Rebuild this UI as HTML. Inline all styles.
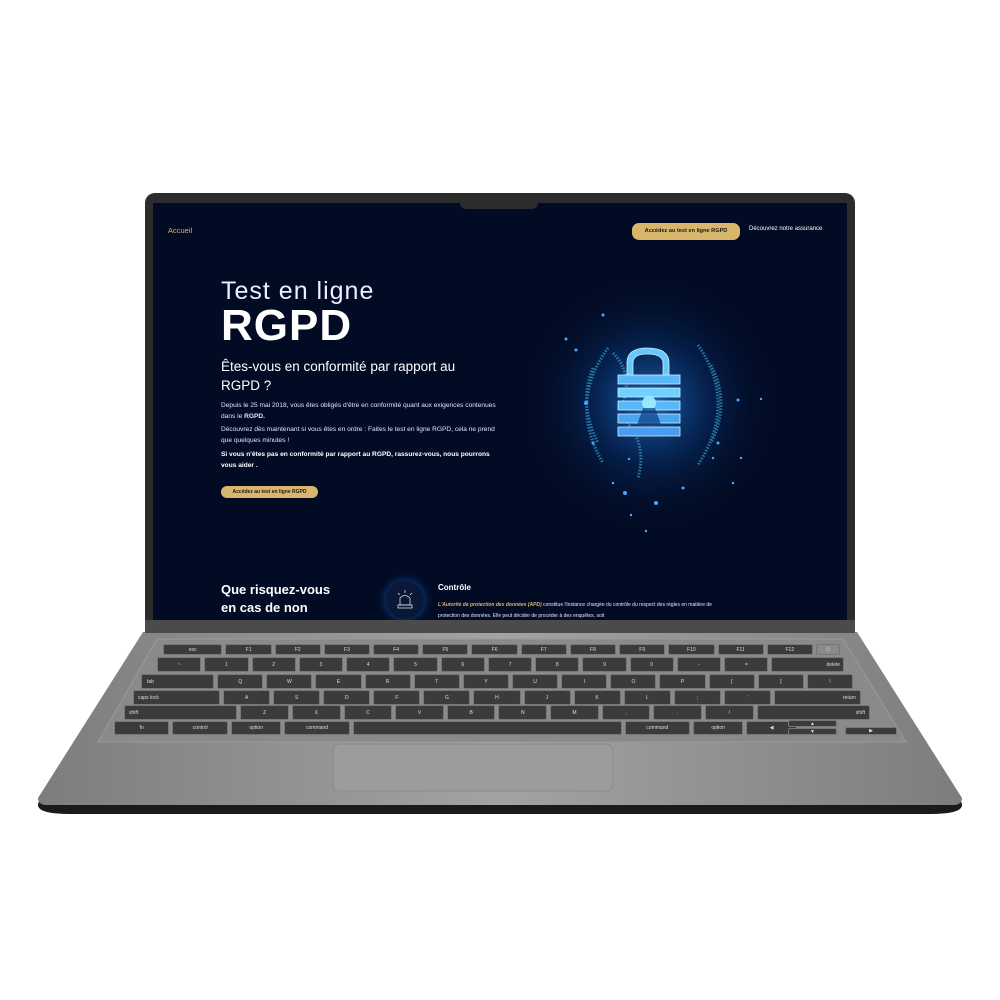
<!DOCTYPE html><html><head><style>
*{margin:0;padding:0;box-sizing:border-box}
body{width:1000px;height:1000px;background:#fff;position:relative;overflow:hidden;font-family:"Liberation Sans",sans-serif}
.abs{position:absolute}
.lid{left:145px;top:193px;width:710px;height:440px;background:#2c2c2c;border-radius:10px 10px 0 0}
.hinge{left:145px;top:620px;width:710px;height:13px;background:#4b4b4b}
.screen{left:153px;top:203px;width:694px;height:417px;background:#020b24;overflow:hidden;color:#fff}
.notch{left:460px;top:203px;width:78px;height:6px;background:#2c2c2c;border-radius:0 0 6px 6px}
.gold{background:#d9b66b;color:#1a1a1a;font-weight:bold;border-radius:7px;text-align:center}
.row{position:absolute;display:flex;gap:3px}
.k{background:#3b3b3b;border:1px solid #777;border-radius:2px;color:#ddd;font-size:5px;display:flex;align-items:center;justify-content:center;height:100%}
</style></head><body>
<svg class="abs" style="left:0;top:0" width="1000" height="1000">
<defs>
<linearGradient id="bg" x1="0" x2="1"><stop offset="0" stop-color="#7d7d7d"/><stop offset=".5" stop-color="#a3a3a3"/><stop offset="1" stop-color="#7d7d7d"/></linearGradient>
<radialGradient id="glow" cx=".5" cy=".5" r=".5"><stop offset="0" stop-color="#2a8af0" stop-opacity=".7"/><stop offset=".45" stop-color="#0b4a9a" stop-opacity=".35"/><stop offset="1" stop-color="#020b24" stop-opacity="0"/></radialGradient>
</defs>
<path d="M40 800 Q30 814 70 814 L930 814 Q970 814 960 800Z" fill="#1a1a1a"/>
<path d="M143 632 L857 632 L962 798 Q962 804 955 805 L45 805 Q38 804 38 798Z" fill="url(#bg)"/>
<path d="M157 639 L843 639 L906 742 L98 742Z" fill="#8a8a8a" stroke="#9a9a9a"/>
<rect x="333" y="744" width="280" height="47" rx="7" fill="#9c9c9c" stroke="#8a8a8a"/>
</svg>
<div class="abs lid"></div>
<div class="abs hinge"></div>
<div class="abs screen">
<svg class="abs" style="left:0;top:0" width="694" height="417">
<circle cx="497" cy="200" r="130" fill="url(#glow)"/>
<g fill="none" stroke="#3fb0e0" stroke-dasharray="1.5 1.5" stroke-width="3" opacity=".6">
<path d="M455 145 Q415 200 450 260"/><path d="M440 165 Q425 200 445 240"/><path d="M545 142 Q585 200 545 262"/><path d="M558 162 Q578 200 558 240"/><path d="M470 215 Q495 240 485 275"/><path d="M460 150 Q480 170 470 200"/>
</g>
<g fill="#4aa8ff">
<circle cx="413" cy="136" r="1.5"/><circle cx="423" cy="147" r="1.5"/><circle cx="450" cy="112" r="1.5"/><circle cx="585" cy="197" r="1.5"/><circle cx="608" cy="196" r="1.2"/><circle cx="433" cy="200" r="2"/><circle cx="440" cy="240" r="1.5"/><circle cx="472" cy="290" r="2"/><circle cx="503" cy="300" r="2"/><circle cx="476" cy="256" r="1.2"/><circle cx="588" cy="255" r="1.2"/><circle cx="580" cy="280" r="1.2"/><circle cx="460" cy="280" r="1.2"/><circle cx="478" cy="312" r="1.2"/><circle cx="560" cy="255" r="1.2"/><circle cx="530" cy="285" r="1.5"/><circle cx="493" cy="328" r="1.2"/><circle cx="565" cy="240" r="1.5"/>
</g>
<g fill="#64c8ff" stroke="#c8f0ff" stroke-width=".8">
<path d="M474 172 L474 160 Q474 145 494 145 Q516 145 516 160 L516 172 L510 172 L510 160 Q510 151 494 151 Q480 151 480 160 L480 172Z"/>
<rect x="465" y="172" width="62" height="9" fill="#5ab8f8"/><rect x="465" y="185" width="62" height="9" fill="#70d0ff"/><rect x="465" y="198" width="62" height="9" fill="#5ab8f8"/><rect x="465" y="211" width="62" height="9" fill="#4aa4f0"/><rect x="465" y="224" width="62" height="9" fill="#4a9cf0"/>
</g>
<circle cx="496" cy="200" r="7" fill="#a0f0ff" opacity=".9"/>
<path d="M490 205 L484 222 L508 222 L502 205Z" fill="#0a3a80" opacity=".7"/>
</svg>
<div class="abs" style="left:15px;top:23px;font-size:7.5px;color:#d9b66b">Accueil</div>
<div class="abs gold" style="left:479px;top:20px;width:108px;height:17px;font-size:5.6px;line-height:17px">Accédez au test en ligne RGPD</div>
<div class="abs" style="left:596px;top:23px;font-size:6px">Découvrez notre assurance</div>
<div class="abs" style="left:68px;top:74px;font-size:25px;letter-spacing:1px;color:#eef">Test en ligne</div>
<div class="abs" style="left:68px;top:98px;font-size:44px;font-weight:bold;letter-spacing:1px">RGPD</div>
<div class="abs" style="left:68px;top:154px;font-size:13.5px;line-height:19px;width:270px">Êtes-vous en conformité par rapport au RGPD ?</div>
<div class="abs" style="left:68px;top:197px;font-size:6.6px;line-height:11px;width:278px;color:#dfe6ff">Depuis le 25 mai 2018, vous êtes obligés d'être en conformité quant aux exigences contenues dans le <b>RGPD.</b><div style="height:2px"></div>Découvrez dès maintenant si vous êtes en ordre : Faites le test en ligne RGPD, cela ne prend que quelques minutes !<div style="height:3px"></div><b style="color:#fff">Si vous n'êtes pas en conformité par rapport au RGPD, rassurez-vous, nous pourrons vous aider .</b></div>
<div class="abs gold" style="left:68px;top:283px;width:97px;height:12px;font-size:5px;line-height:12px;border-radius:6px">Accédez au test en ligne RGPD</div>
<div class="abs" style="left:68px;top:378px;font-size:13px;font-weight:bold;line-height:18px">Que risquez-vous<br>en cas de non</div>
<div class="abs" style="left:233px;top:378px;width:38px;height:38px;border-radius:50%;background:#0a1838;box-shadow:0 0 10px #0d4aa0"><svg width="38" height="38"><g fill="none" stroke="#ddd" stroke-width=".8"><path d="M14 24 L14 17 Q19 12 24 17 L24 24Z"/><rect x="12" y="24" width="14" height="3"/><path d="M19 9v3M12 12l2 2M26 12l-2 2"/></g></svg></div>
<div class="abs" style="left:285px;top:380px;font-size:8px;font-weight:bold">Contrôle</div>
<div class="abs" style="left:285px;top:397px;font-size:5px;line-height:11px;width:285px;color:#dfe6ff"><i style="color:#d9b66b;font-weight:bold">L'Autorité de protection des données (APD)</i> constitue l'instance chargée du contrôle du respect des règles en matière de protection des données. Elle peut décider de procéder à des enquêtes, soit</div>
</div>
<div class="abs notch"></div>
<div class="row" style="left:163px;top:644px;height:11px;width:677px">
<div class="k" style="flex:1.3">esc</div><div class="k" style="flex:1">F1</div><div class="k" style="flex:1">F2</div><div class="k" style="flex:1">F3</div><div class="k" style="flex:1">F4</div><div class="k" style="flex:1">F5</div><div class="k" style="flex:1">F6</div><div class="k" style="flex:1">F7</div><div class="k" style="flex:1">F8</div><div class="k" style="flex:1">F9</div><div class="k" style="flex:1">F10</div><div class="k" style="flex:1">F11</div><div class="k" style="flex:1">F12</div><div class="k" style="flex:.5;background:#8a8a8a">⏻</div></div>
<div class="row" style="left:157px;top:657px;height:15px;width:687px">
<div class="k" style="flex:1">~</div><div class="k" style="flex:1">1</div><div class="k" style="flex:1">2</div><div class="k" style="flex:1">3</div><div class="k" style="flex:1">4</div><div class="k" style="flex:1">5</div><div class="k" style="flex:1">6</div><div class="k" style="flex:1">7</div><div class="k" style="flex:1">8</div><div class="k" style="flex:1">9</div><div class="k" style="flex:1">0</div><div class="k" style="flex:1">-</div><div class="k" style="flex:1">=</div><div class="k" style="flex:1.6;justify-content:flex-end;padding-right:3px">delete</div></div>
<div class="row" style="left:141px;top:674px;height:15px;width:712px">
<div class="k" style="flex:1.5;justify-content:flex-start;padding-left:5px">tab</div><div class="k" style="flex:1">Q</div><div class="k" style="flex:1">W</div><div class="k" style="flex:1">E</div><div class="k" style="flex:1">R</div><div class="k" style="flex:1">T</div><div class="k" style="flex:1">Y</div><div class="k" style="flex:1">U</div><div class="k" style="flex:1">I</div><div class="k" style="flex:1">O</div><div class="k" style="flex:1">P</div><div class="k" style="flex:1">[</div><div class="k" style="flex:1">]</div><div class="k" style="flex:1">\</div></div>
<div class="row" style="left:133px;top:690px;height:15px;width:728px">
<div class="k" style="flex:1.8;justify-content:flex-start;padding-left:4px">caps lock</div><div class="k" style="flex:1">A</div><div class="k" style="flex:1">S</div><div class="k" style="flex:1">D</div><div class="k" style="flex:1">F</div><div class="k" style="flex:1">G</div><div class="k" style="flex:1">H</div><div class="k" style="flex:1">J</div><div class="k" style="flex:1">K</div><div class="k" style="flex:1">L</div><div class="k" style="flex:1">;</div><div class="k" style="flex:1">'</div><div class="k" style="flex:1.8;justify-content:flex-end;padding-right:4px">return</div></div>
<div class="row" style="left:124px;top:705px;height:15px;width:746px">
<div class="k" style="flex:2.3;justify-content:flex-start;padding-left:4px">shift</div><div class="k" style="flex:1">Z</div><div class="k" style="flex:1">X</div><div class="k" style="flex:1">C</div><div class="k" style="flex:1">V</div><div class="k" style="flex:1">B</div><div class="k" style="flex:1">N</div><div class="k" style="flex:1">M</div><div class="k" style="flex:1">,</div><div class="k" style="flex:1">.</div><div class="k" style="flex:1">/</div><div class="k" style="flex:2.3;justify-content:flex-end;padding-right:4px">shift</div></div>
<div class="row" style="left:114px;top:721px;height:14px;width:683px">
<div class="k" style="flex:1.1">fn</div><div class="k" style="flex:1.1">control</div><div class="k" style="flex:1">option</div><div class="k" style="flex:1.3">command</div><div class="k" style="flex:5.5"></div><div class="k" style="flex:1.3">command</div><div class="k" style="flex:1">option</div><div class="k" style="flex:1">◀</div></div>
<div class="abs k" style="left:788px;top:720px;width:49px;height:7px">▲</div>
<div class="abs k" style="left:788px;top:728px;width:49px;height:7px">▼</div>
<div class="abs k" style="left:845px;top:727px;width:52px;height:8px">▶</div>
</body></html>
